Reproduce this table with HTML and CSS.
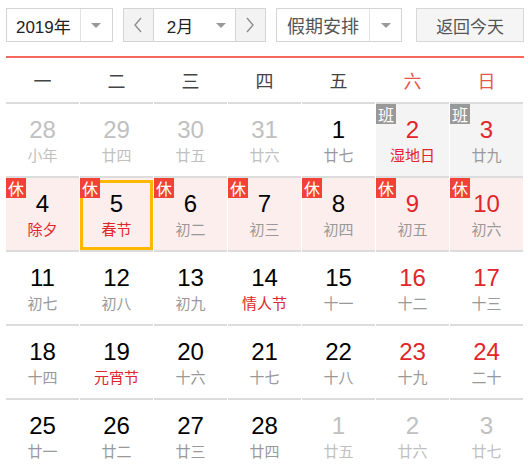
FILE: index.html
```html
<!DOCTYPE html>
<html lang="zh-CN">
<head>
    <meta charset="UTF-8">
    <title>万年历</title>
    <link rel="stylesheet" href="styles.css">
</head>
<body>
    <main class="calendar">
        <div class="toolbar">
            <div class="select year-select">
                <span class="select-text">2019年</span>
                <span class="select-arrow"></span>
            </div>
            <div class="month-group">
                <button class="nav-btn">
                    <svg width="10" height="16" viewBox="0 0 10 16"><path d="M8 1 L2 8 L8 15" fill="none" stroke="#8a8a8a" stroke-width="1.3"/></svg>
                </button>
                <div class="select month-select">
                    <span class="select-text">2月</span>
                    <span class="select-arrow plain"></span>
                </div>
                <button class="nav-btn">
                    <svg width="10" height="16" viewBox="0 0 10 16"><path d="M2 1 L8 8 L2 15" fill="none" stroke="#8a8a8a" stroke-width="1.3"/></svg>
                </button>
            </div>
            <div class="select holiday-select">
                <span class="select-text">假期安排</span>
                <span class="select-arrow"></span>
            </div>
            <button class="today-btn">返回今天</button>
        </div>

        <div class="weekdays">
            <div>一</div><div>二</div><div>三</div><div>四</div><div>五</div>
            <div class="weekend">六</div><div class="weekend">日</div>
        </div>

        <div class="days">
            <div class="day other"><span class="num">28</span><span class="lunar">小年</span></div>
            <div class="day other"><span class="num">29</span><span class="lunar">廿四</span></div>
            <div class="day other"><span class="num">30</span><span class="lunar">廿五</span></div>
            <div class="day other"><span class="num">31</span><span class="lunar">廿六</span></div>
            <div class="day"><span class="num">1</span><span class="lunar">廿七</span></div>
            <div class="day work"><i class="badge">班</i><span class="num red">2</span><span class="lunar red">湿地日</span></div>
            <div class="day work"><i class="badge">班</i><span class="num red">3</span><span class="lunar">廿九</span></div>

            <div class="day rest"><i class="badge">休</i><span class="num">4</span><span class="lunar red">除夕</span></div>
            <div class="day rest selected"><i class="badge">休</i><span class="num">5</span><span class="lunar red">春节</span></div>
            <div class="day rest"><i class="badge">休</i><span class="num">6</span><span class="lunar">初二</span></div>
            <div class="day rest"><i class="badge">休</i><span class="num">7</span><span class="lunar">初三</span></div>
            <div class="day rest"><i class="badge">休</i><span class="num">8</span><span class="lunar">初四</span></div>
            <div class="day rest"><i class="badge">休</i><span class="num red">9</span><span class="lunar">初五</span></div>
            <div class="day rest"><i class="badge">休</i><span class="num red">10</span><span class="lunar">初六</span></div>

            <div class="day"><span class="num">11</span><span class="lunar">初七</span></div>
            <div class="day"><span class="num">12</span><span class="lunar">初八</span></div>
            <div class="day"><span class="num">13</span><span class="lunar">初九</span></div>
            <div class="day"><span class="num">14</span><span class="lunar red">情人节</span></div>
            <div class="day"><span class="num">15</span><span class="lunar">十一</span></div>
            <div class="day"><span class="num red">16</span><span class="lunar">十二</span></div>
            <div class="day"><span class="num red">17</span><span class="lunar">十三</span></div>

            <div class="day"><span class="num">18</span><span class="lunar">十四</span></div>
            <div class="day"><span class="num">19</span><span class="lunar red">元宵节</span></div>
            <div class="day"><span class="num">20</span><span class="lunar">十六</span></div>
            <div class="day"><span class="num">21</span><span class="lunar">十七</span></div>
            <div class="day"><span class="num">22</span><span class="lunar">十八</span></div>
            <div class="day"><span class="num red">23</span><span class="lunar">十九</span></div>
            <div class="day"><span class="num red">24</span><span class="lunar">二十</span></div>

            <div class="day"><span class="num">25</span><span class="lunar">廿一</span></div>
            <div class="day"><span class="num">26</span><span class="lunar">廿二</span></div>
            <div class="day"><span class="num">27</span><span class="lunar">廿三</span></div>
            <div class="day"><span class="num">28</span><span class="lunar">廿四</span></div>
            <div class="day other"><span class="num">1</span><span class="lunar">廿五</span></div>
            <div class="day other"><span class="num">2</span><span class="lunar">廿六</span></div>
            <div class="day other"><span class="num">3</span><span class="lunar">廿七</span></div>
        </div>
    </main>
</body>
</html>
```

FILE: styles.css
```css
body {
    margin: 0;
    font-family: "Liberation Sans", "Noto Sans CJK SC", sans-serif;
    color: #000;
    background: #fff;
}
.calendar {
    width: 518px;
    padding: 8px 0 0 6px;
}
.toolbar {
    display: flex;
    height: 34px;
    padding-bottom: 14px;
    border-bottom: 2px solid #f6685c;
}
.select {
    display: flex;
    box-sizing: border-box;
    height: 34px;
    border: 1px solid #d4d4d4;
    background: #fff;
    font-size: 17px;
    color: #222;
}
.select-text {
    flex: 1;
    display: flex;
    align-items: center;
    justify-content: center;
}
.select-arrow {
    width: 31px;
    border-left: 1px solid #e2e2e2;
    display: flex;
    align-items: center;
    justify-content: center;
}
.select-arrow::after {
    content: "";
    border-left: 5px solid transparent;
    border-right: 5px solid transparent;
    border-top: 5px solid #999;
}
.select-arrow.plain {
    border-left: none;
    width: 28px;
}
.year-select {
    width: 107px;
}
.month-group {
    display: flex;
    margin-left: 10px;
}
.nav-btn {
    box-sizing: border-box;
    width: 31px;
    height: 34px;
    border: 1px solid #d4d4d4;
    background: #f3f3f3;
    padding: 0;
    display: flex;
    align-items: center;
    justify-content: center;
}
.month-select {
    width: 81px;
    border-left: none;
    border-right: none;
}
.month-select .select-text {
    justify-content: flex-start;
    padding-left: 13px;
}
.holiday-select {
    width: 127px;
    margin-left: 10px;
    font-size: 18px;
}
.holiday-select .select-text {
    color: #555;
}
.today-btn {
    box-sizing: border-box;
    width: 108px;
    height: 34px;
    margin-left: 14px;
    border: 1px solid #d8d8d8;
    background: #f5f5f5;
    font-size: 17px;
    color: #555;
    font-family: "Noto Sans CJK SC", sans-serif;
}
.weekdays {
    display: grid;
    grid-template-columns: repeat(7, 73px);
    column-gap: 1px;
    height: 44px;
    align-items: center;
    text-align: center;
    font-size: 18px;
    color: #444;
    font-family: "Noto Sans CJK SC", sans-serif;
}
.weekdays .weekend {
    color: #e8554a;
}
.days {
    display: grid;
    grid-template-columns: repeat(7, 73px);
    column-gap: 1px;
}
.day {
    position: relative;
    height: 72px;
    border-top: 2px solid #dcdcdc;
    display: flex;
    flex-direction: column;
    align-items: center;
}
.num {
    margin-top: 13px;
    font-size: 24px;
    line-height: 26px;
}
.lunar {
    font-size: 15px;
    line-height: 24px;
    color: #999;
    font-family: "Noto Sans CJK SC", sans-serif;
}
.red {
    color: #e0262b;
}
.other .num,
.other .lunar {
    color: #c0c0c0;
}
.rest {
    background: #fdeeee;
}
.work {
    background: #f4f4f4;
}
.badge {
    position: absolute;
    top: 0;
    left: 0;
    z-index: 2;
    width: 20px;
    height: 20px;
    font-style: normal;
    font-size: 16px;
    line-height: 20px;
    text-align: center;
    color: #fff;
    background: #f24137;
    font-family: "Noto Sans CJK SC", sans-serif;
}
.work .badge {
    background: #999;
}
.selected::after {
    content: "";
    position: absolute;
    top: 2px;
    left: 0;
    right: 0;
    bottom: 0;
    border: 3px solid #ffb800;
}
```
